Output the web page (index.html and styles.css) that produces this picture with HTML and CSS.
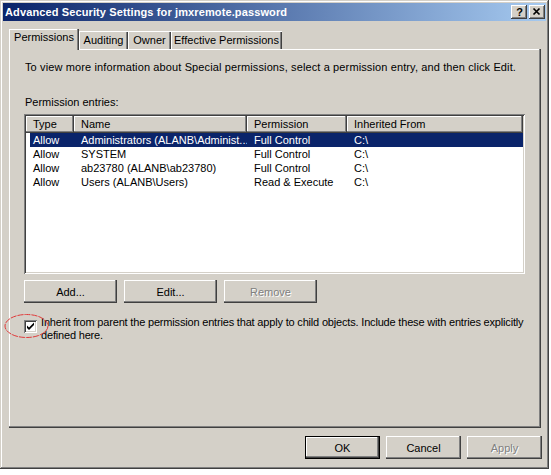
FILE: index.html
```html
<!DOCTYPE html>
<html>
<head>
<meta charset="utf-8">
<title>Advanced Security Settings</title>
<link rel="stylesheet" href="styles.css">
</head>
<body>
<div class="window">
  <div class="titlebar">
    <span class="title">Advanced Security Settings for jmxremote.password</span>
    <div class="tbtns">
      <span class="tbtn help">?</span>
      <span class="tbtn close"><svg width="16" height="14" viewBox="0 0 16 14"><path d="M4.5 3.5 L10.5 9.5 M10.5 3.5 L4.5 9.5" stroke="#000" stroke-width="1.7" fill="none"/></svg></span>
    </div>
  </div>
  <div class="body">
    <div class="tabs">
      <div class="tab active t1">Permissions</div>
      <div class="tab t2">Auditing</div>
      <div class="tab t3">Owner</div>
      <div class="tab t4">Effective Permissions</div>
    </div>
    <div class="panel">
      <p class="desc">To view more information about Special permissions, select a permission entry, and then click Edit.</p>
      <p class="label">Permission entries:</p>
      <div class="listbox">
        <div class="lv-head">
          <div class="hcell">Type</div>
          <div class="hcell">Name</div>
          <div class="hcell">Permission</div>
          <div class="hcell">Inherited From</div>
        </div>
        <div class="lv-row sel">
          <div class="cell">Allow</div>
          <div class="cell">Administrators (ALANB\Administ...</div>
          <div class="cell">Full Control</div>
          <div class="cell">C:\</div>
        </div>
        <div class="lv-row">
          <div class="cell">Allow</div>
          <div class="cell">SYSTEM</div>
          <div class="cell">Full Control</div>
          <div class="cell">C:\</div>
        </div>
        <div class="lv-row">
          <div class="cell">Allow</div>
          <div class="cell">ab23780 (ALANB\ab23780)</div>
          <div class="cell">Full Control</div>
          <div class="cell">C:\</div>
        </div>
        <div class="lv-row">
          <div class="cell">Allow</div>
          <div class="cell">Users (ALANB\Users)</div>
          <div class="cell">Read &amp; Execute</div>
          <div class="cell">C:\</div>
        </div>
      </div>
      <div class="btnrow">
        <button class="btn">Add...</button>
        <button class="btn">Edit...</button>
        <button class="btn disabled">Remove</button>
      </div>
      <div class="inherit">
        <span class="chk"><svg width="9" height="9" viewBox="0 0 9 9"><path d="M1 3.5 L3 5.5 L8 0.5 L8 3 L3 8 L1 6 Z" fill="#000"/></svg></span>
        <span class="chktext">Inherit from parent the permission entries that apply to child objects. Include these with entries explicitly<br>defined here.</span>
      </div>
    </div>
    <div class="footer">
      <button class="btn fbtn default">OK</button>
      <button class="btn fbtn">Cancel</button>
      <button class="btn fbtn disabled">Apply</button>
    </div>
  </div>
  <svg class="mark" width="46" height="27" viewBox="0 0 46 27"><ellipse cx="22.5" cy="13" rx="21.5" ry="11.5" fill="none" stroke="#e03a3a" stroke-width="1" stroke-dasharray="6 1"/></svg>
</div>
</body>
</html>
```
FILE: styles.css
```css
html, body {
  margin: 0;
  padding: 0;
}
body {
  width: 551px;
  height: 475px;
  overflow: hidden;
  background: #ffffff;
  font-family: "Liberation Sans", Arial, sans-serif;
  font-size: 11px;
  color: #000;
}
.window {
  position: relative;
  width: 549px;
  height: 469px;
  box-sizing: border-box;
  padding: 3px;
  background: #d4d0c8;
  box-shadow: inset -1px -1px #404040, inset 1px 1px #d4d0c8, inset -2px -2px #808080, inset 2px 2px #ffffff;
  display: flex;
  flex-direction: column;
}
.titlebar {
  height: 18px;
  flex: none;
  background: linear-gradient(to right, #0a246a, #a6caf0);
  display: flex;
  align-items: center;
  justify-content: space-between;
  padding-left: 2px;
}
.title {
  color: #fff;
  font-weight: bold;
  font-size: 11px;
  letter-spacing: 0.12px;
  white-space: nowrap;
}
.tbtns {
  display: flex;
  gap: 2px;
  margin-right: 1px;
}
.tbtn {
  width: 16px;
  height: 14px;
  box-sizing: border-box;
  background: #d4d0c8;
  box-shadow: inset -1px -1px #404040, inset 1px 1px #ffffff, inset -2px -2px #808080;
  display: flex;
  align-items: center;
  justify-content: center;
}
.help {
  font-weight: bold;
  font-size: 11px;
  line-height: 14px;
  padding-left: 1px;
}
.close svg {
  display: block;
}
.body {
  flex: 1;
  display: flex;
  flex-direction: column;
  padding: 8px 5px 0 6px;
}
.tabs {
  display: flex;
  align-items: flex-end;
  height: 20px;
  flex: none;
}
.tab {
  height: 18px;
  box-sizing: border-box;
  line-height: 18px;
  text-align: center;
  white-space: nowrap;
  background: #d4d0c8;
  box-shadow: inset 1px 1px #ffffff, inset -1px 0 #404040, inset -2px 0 #808080;
}
.tab.active {
  height: 21px;
  line-height: 17px;
  margin-bottom: -1px;
  position: relative;
  z-index: 1;
  box-shadow: inset -1px 0 #404040, inset -2px 0 #808080, inset 1px 1px #ffffff;
}
.t1 { width: 70px; }
.t2 { width: 49px; }
.t3 { width: 43px; }
.t4 { width: 111px; }
.panel {
  flex: none;
  height: 379px;
  box-sizing: border-box;
  padding: 12px 15px 0 15px;
  box-shadow: inset -1px -1px #404040, inset -2px -2px #808080, inset 1px 1px #ffffff;
  display: flex;
  flex-direction: column;
}
.desc, .label {
  margin: 0;
  line-height: 13px;
  white-space: nowrap;
  padding-left: 1px;
}
.desc {
  letter-spacing: 0.12px;
}
.label {
  margin-top: 22px;
}
.listbox {
  margin-top: 5px;
  width: 501px;
  height: 160px;
  box-sizing: border-box;
  padding: 2px;
  background: #ffffff;
  box-shadow: inset 1px 1px #808080, inset -1px -1px #ffffff, inset 2px 2px #404040, inset -2px -2px #d4d0c8;
}
.lv-head, .lv-row {
  display: grid;
  grid-template-columns: 48px 173px 100px 176px;
}
.hcell {
  height: 17px;
  box-sizing: border-box;
  line-height: 16px;
  padding-left: 7px;
  background: #d4d0c8;
  white-space: nowrap;
  box-shadow: inset -1px -1px #404040, inset -2px -2px #808080, inset 1px 1px #ffffff;
}
.lv-row {
  height: 14px;
  line-height: 14px;
}
.lv-row.sel {
  color: #fff;
  background: linear-gradient(to right, transparent 4px, #0a246a 4px);
}
.cell {
  padding-left: 7px;
  white-space: nowrap;
  overflow: hidden;
}
.btnrow {
  display: flex;
  gap: 7px;
  margin-top: 6px;
}
.btn {
  width: 93px;
  height: 23px;
  padding: 0;
  border: 0;
  margin: 0;
  background: #d4d0c8;
  font-family: "Liberation Sans", Arial, sans-serif;
  font-size: 11px;
  color: #000;
  box-shadow: inset -1px -1px #404040, inset -2px -2px #808080, inset 1px 1px #ffffff;
}
.btn.disabled {
  color: #808080;
  text-shadow: 1px 1px #ffffff;
}
.inherit {
  display: flex;
  align-items: flex-start;
  margin-top: 13px;
}
.chk {
  flex: none;
  width: 13px;
  height: 13px;
  box-sizing: border-box;
  margin-top: 4px;
  background: #ffffff;
  box-shadow: inset 1px 1px #808080, inset -1px -1px #ffffff, inset 2px 2px #404040, inset -2px -2px #d4d0c8;
  display: flex;
  align-items: center;
  justify-content: center;
}
.chk svg {
  display: block;
}
.chktext {
  margin-left: 4px;
  line-height: 13px;
  letter-spacing: -0.18px;
  white-space: nowrap;
}
.footer {
  display: flex;
  justify-content: flex-end;
  gap: 6px;
  margin-top: 8px;
  margin-right: -1px;
}
.fbtn {
  width: 75px;
}
.fbtn.default {
  box-shadow: inset 0 0 0 1px #000000, inset -2px -2px #404040, inset -3px -3px #808080, inset 2px 2px #ffffff;
}
.mark {
  position: absolute;
  left: 4px;
  top: 313px;
}
```
